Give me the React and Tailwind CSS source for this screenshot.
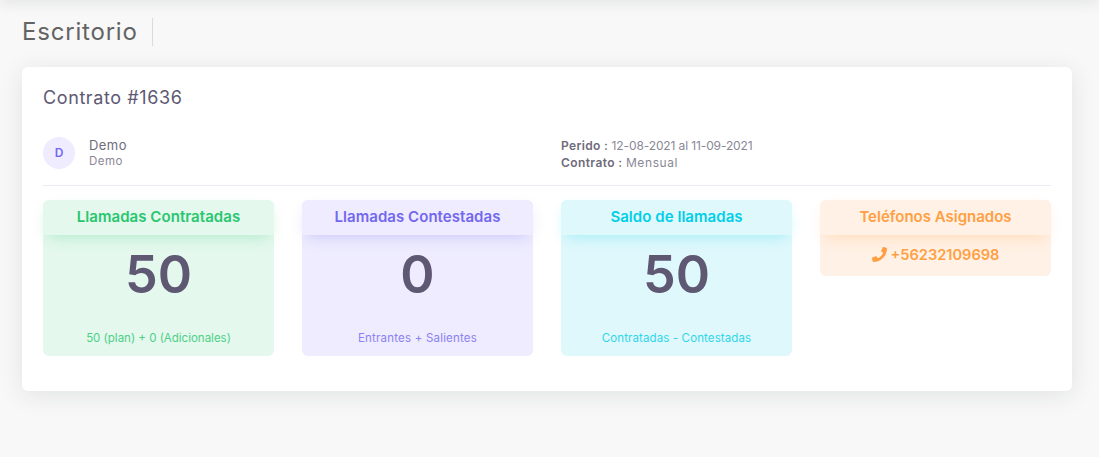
import { FaPhone } from 'react-icons/fa'

function StatCard({ title, value, note, bg, text, shadow, noteTracking }) {
  return (
    <div className={`h-[156px] rounded-md flex flex-col ${bg}`}>
      <div className={`h-[35px] shrink-0 rounded-t-md flex items-center justify-center text-[15px] tracking-[0.05px] font-semibold ${bg} ${text} ${shadow}`}>
        {title}
      </div>
      <div className="flex-1 flex flex-col items-center">
        <div className="mt-[9px] text-[52px] leading-[62px] font-semibold text-[#5e5873]">{value}</div>
        <div className={`mt-auto mb-[10px] text-[11.5px] leading-4 opacity-80 ${noteTracking} ${text}`}>{note}</div>
      </div>
    </div>
  )
}

export default function App() {
  return (
    <div className="relative min-h-[457px] bg-[#f8f8f8] pl-[22px] pr-[27px] pt-[18px] font-['Inter','Open_Sans',sans-serif] overflow-hidden">
      {/* navbar shadow coming from above */}
      <div className="absolute left-0 right-0 -top-[10px] h-[10px] shadow-[0_2px_14px_rgba(34,41,47,0.12)]" />

      <div className="flex items-center h-[28px]">
        <h1 className="text-[24px] tracking-[0.8px] leading-7 text-[#636363] pr-[14px] border-r border-[#d6dce1]">Escritorio</h1>
      </div>

      <div className="mt-[21px] h-[324px] bg-white rounded-md px-[21px] pt-[19px] shadow-[0_4px_24px_0_rgba(34,41,47,0.1)]">
        <h2 className="text-[18px] tracking-[0.6px] leading-[24px] font-normal text-[#5e5873]">Contrato #1636</h2>

        <div className="mt-[27px] h-[49px] grid grid-cols-[518px_1fr] border-b border-[#ebe9f1]">
          <div className="flex items-start">
            <div className="w-8 h-8 rounded-full bg-[#eeecfe] text-[#7367f0] text-[12px] font-semibold flex items-center justify-center">D</div>
            <div className="ml-[14px]">
              <div className="text-[13px] tracking-[0.45px] leading-4 text-[#6e6b7b]">Demo</div>
              <div className="text-[11.5px] tracking-[0.5px] leading-[14px] mt-px text-[#8a8797]">Demo</div>
            </div>
          </div>
          <div className="text-[12px] leading-[17px] text-[#8a8797]">
            <div><span className="font-semibold tracking-[0.35px] text-[#6e6b7b]">Perido :</span> <span className="tracking-[-0.12px]">12-08-2021 al 11-09-2021</span></div>
            <div><span className="font-semibold tracking-[0.4px] text-[#6e6b7b]">Contrato :</span> <span className="tracking-[0.6px]">Mensual</span></div>
          </div>
        </div>

        <div className="mt-[14px] grid grid-cols-4 gap-[28px] items-start">
          <StatCard
            title="Llamadas Contratadas"
            value="50"
            note="50 (plan) + 0 (Adicionales)"
            bg="bg-[#e4f8ed]"
            text="text-[#28c76f]"
            shadow="shadow-[0_6px_15px_-5px_rgba(40,199,111,0.3)]"
            noteTracking="tracking-normal"
          />
          <StatCard
            title="Llamadas Contestadas"
            value="0"
            note="Entrantes + Salientes"
            bg="bg-[#eeecfe]"
            text="text-[#7367f0]"
            shadow="shadow-[0_6px_15px_-5px_rgba(115,103,240,0.3)]"
            noteTracking="tracking-[0.2px]"
          />
          <StatCard
            title="Saldo de llamadas"
            value="50"
            note="Contratadas - Contestadas"
            bg="bg-[#dff8fc]"
            text="text-[#00cfe8]"
            shadow="shadow-[0_6px_15px_-5px_rgba(0,207,232,0.3)]"
            noteTracking="tracking-[0.12px]"
          />
          <div className="rounded-md bg-[#fff1e5]">
            <div className="h-[35px] rounded-t-md flex items-center justify-center text-[15px] font-semibold text-[#ff9f43] bg-[#fff1e5] shadow-[0_6px_15px_-5px_rgba(255,159,67,0.3)]">
              Teléfonos Asignados
            </div>
            <div className="h-[41px] flex items-center justify-center gap-[4px] text-[14.6px] font-semibold text-[#ff9f43]">
              <FaPhone className="w-[15px] h-[15px] -mt-[3px]" />
              <span>+56232109698</span>
            </div>
          </div>
        </div>
      </div>
    </div>
  )
}
